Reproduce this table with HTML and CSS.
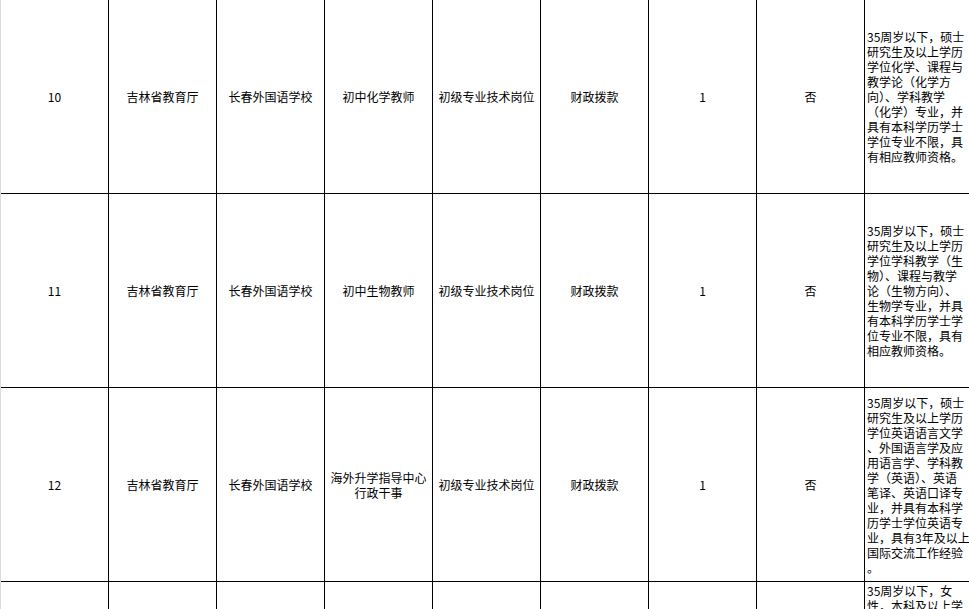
FILE: index.html
```html
<!DOCTYPE html>
<html lang="zh-CN">
<head>
<meta charset="utf-8">
<title>岗位表</title>
<link rel="stylesheet" href="styles.css">
</head>
<body>
<div class="sheet">
  <div class="cell">10</div>
  <div class="cell">吉林省教育厅</div>
  <div class="cell">长春外国语学校</div>
  <div class="cell">初中化学教师</div>
  <div class="cell">初级专业技术岗位</div>
  <div class="cell">财政拨款</div>
  <div class="cell">1</div>
  <div class="cell">否</div>
  <div class="cell req">35周岁以下，硕士<br>研究生及以上学历<br>学位化学、课程与<br>教学论（化学方<br>向）、学科教学<br>（化学）专业，并<br>具有本科学历学士<br>学位专业不限，具<br>有相应教师资格。</div>

  <div class="cell">11</div>
  <div class="cell">吉林省教育厅</div>
  <div class="cell">长春外国语学校</div>
  <div class="cell">初中生物教师</div>
  <div class="cell">初级专业技术岗位</div>
  <div class="cell">财政拨款</div>
  <div class="cell">1</div>
  <div class="cell">否</div>
  <div class="cell req">35周岁以下，硕士<br>研究生及以上学历<br>学位学科教学（生<br>物）、课程与教学<br>论（生物方向）、<br>生物学专业，并具<br>有本科学历学士学<br>位专业不限，具有<br>相应教师资格。</div>

  <div class="cell">12</div>
  <div class="cell">吉林省教育厅</div>
  <div class="cell">长春外国语学校</div>
  <div class="cell">海外升学指导中心<br>行政干事</div>
  <div class="cell">初级专业技术岗位</div>
  <div class="cell">财政拨款</div>
  <div class="cell">1</div>
  <div class="cell">否</div>
  <div class="cell req">35周岁以下，硕士<br>研究生及以上学历<br>学位英语语言文学<br>、外国语言学及应<br>用语言学、学科教<br>学（英语）、英语<br>笔译、英语口译专<br>业，并具有本科学<br>历学士学位英语专<br>业，具有3年及以上<br>国际交流工作经验<br>。</div>

  <div class="cell last"></div>
  <div class="cell last"></div>
  <div class="cell last"></div>
  <div class="cell last"></div>
  <div class="cell last"></div>
  <div class="cell last"></div>
  <div class="cell last"></div>
  <div class="cell last"></div>
  <div class="cell req last top">35周岁以下，女<br>性，本科及以上学<br>历学士及以上学位<br>，专业不限。</div>
</div>
</body>
</html>
```

FILE: styles.css
```css
html, body {
  margin: 0;
  padding: 0;
  background: #ffffff;
  overflow: hidden;
}

body {
  width: 969px;
  height: 609px;
  font-family: "Noto Sans CJK SC", "Noto Sans", sans-serif;
  font-size: 12px;
  color: #000000;
}

.sheet {
  display: grid;
  grid-template-columns: repeat(9, 108px);
  grid-template-rows: 194px 194px 194px 194px;
  width: 972px;
  border-left: 1px solid #dcdcdc;
}

.cell {
  box-sizing: border-box;
  border-right: 1px solid #000000;
  border-bottom: 1px solid #000000;
  display: flex;
  align-items: center;
  justify-content: center;
  text-align: center;
  line-height: 15px;
  white-space: nowrap;
  overflow: hidden;
}

.req {
  justify-content: flex-start;
  text-align: left;
  padding-left: 2px;
}

.top {
  align-items: flex-start;
  padding-top: 1px;
}
```
